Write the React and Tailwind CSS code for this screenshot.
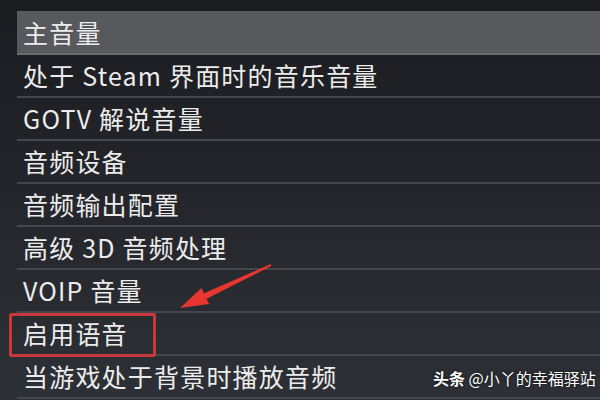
import React from "react";

const rows = [
  "主音量",
  "处于 Steam 界面时的音乐音量",
  "GOTV 解说音量",
  "音频设备",
  "音频输出配置",
  "高级 3D 音频处理",
  "VOIP 音量",
  "启用语音",
  "当游戏处于背景时播放音频",
];

const App = () => {
  return (
    <div
      className="relative w-[600px] h-[400px] overflow-hidden bg-gradient-to-b from-[#1b1c20] via-[#24262b] to-[#2d3036] pt-[11px] pl-[17px]"
      style={{ fontFamily: '"Noto Sans CJK SC", "Noto Sans", sans-serif' }}
    >
      <div className="flex flex-col">
        {rows.map((label, i) => (
          <div
            key={label}
            className={
              i === 0
                ? "h-[44px] flex items-center pl-[6px] bg-[#58595c] border-b-2 border-[#6a6b6e]"
                : "h-[43px] flex items-center pl-[6px] border-b-2 border-[#45474c]"
            }
          >
            <span className="text-[25px] tracking-[1.2px] text-[#ececec] leading-none">
              {label}
            </span>
          </div>
        ))}
      </div>

      <div className="absolute left-[9px] top-[313px] w-[147px] h-[44px] border-[3px] border-[#c9383b] rounded-[2px]" />

      <svg
        className="absolute left-0 top-0"
        width="600"
        height="400"
        viewBox="0 0 600 400"
      >
        <polygon
          points="180,308 201.5,287.9 204,293.3 270.6,264.1 271.4,265.9 206.6,298.7 209.1,304.1"
          fill="#e8352f"
        />
      </svg>

      <div className="absolute left-[433px] top-[370px] text-[16px] text-white leading-none whitespace-nowrap [text-shadow:0_0_3px_rgba(0,0,0,0.8)]">
        <span className="font-bold">头条</span> @小丫的幸福驿站
      </div>
    </div>
  );
};

export default App;
